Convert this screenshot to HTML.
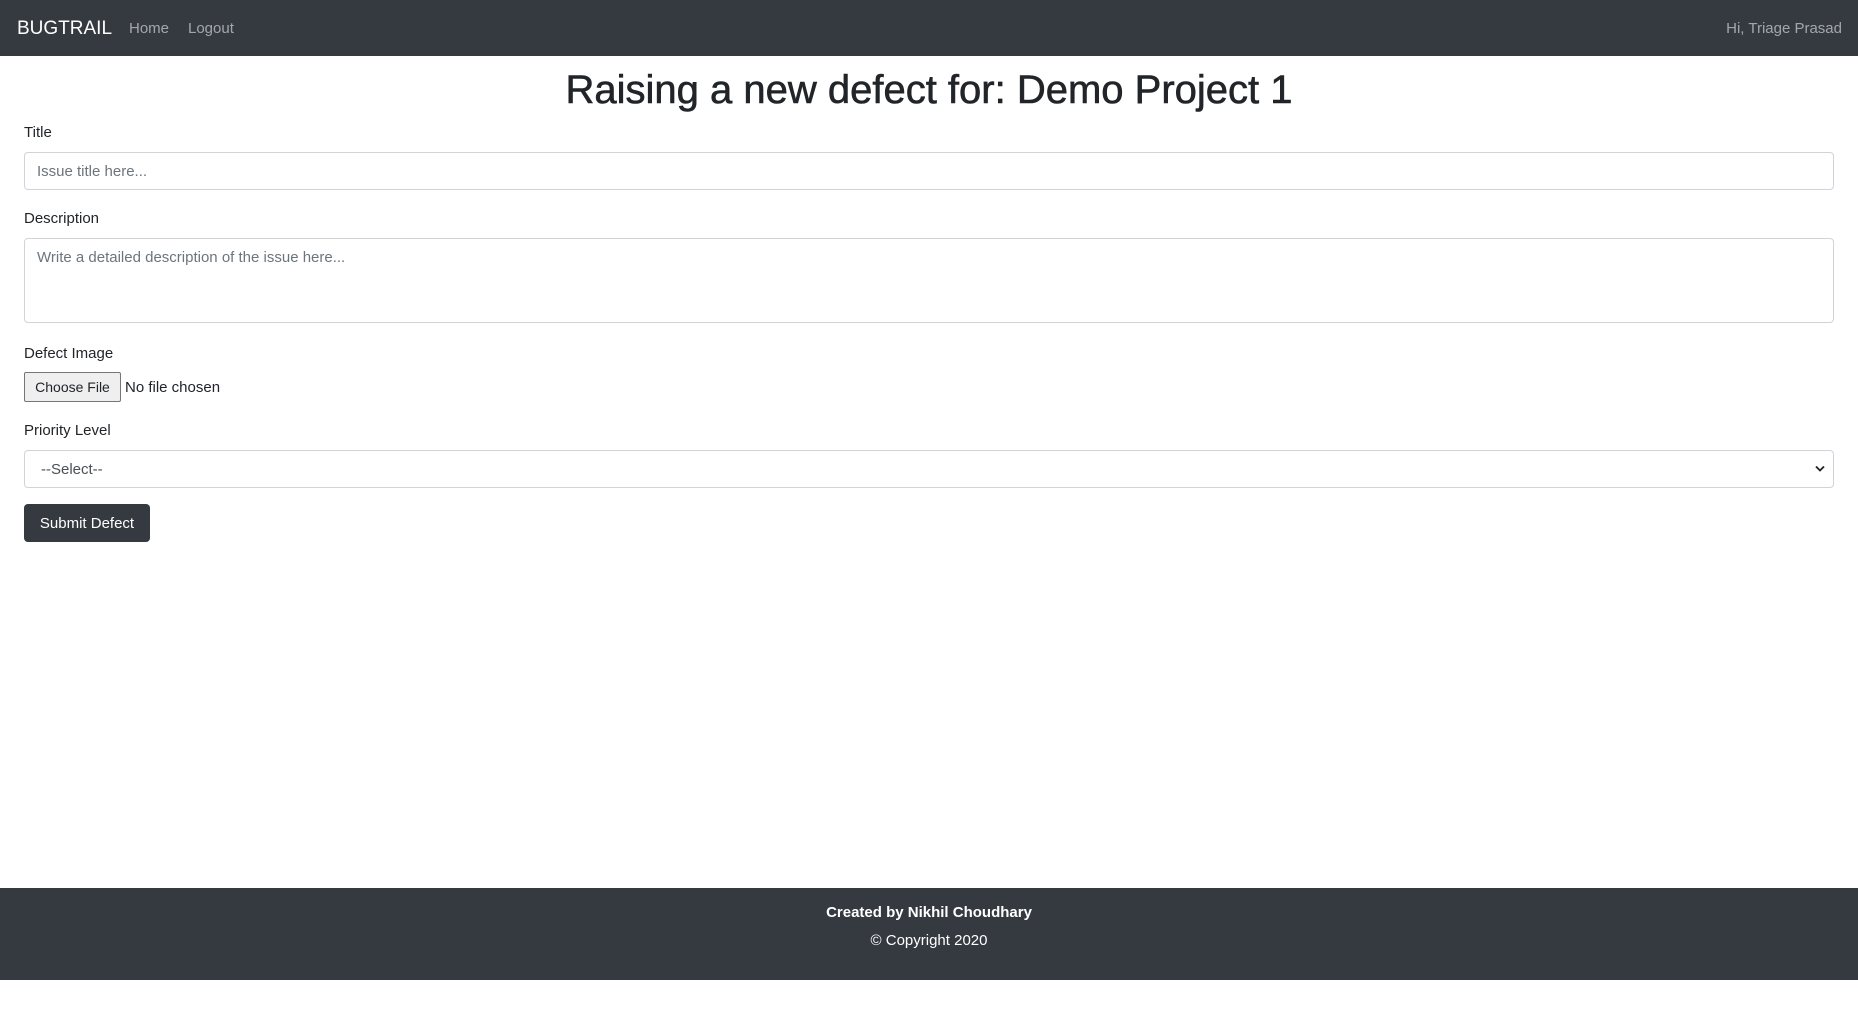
<!DOCTYPE html>
<html><head><meta charset="utf-8"><style>
*{box-sizing:border-box;margin:0;padding:0}
body{width:1858px;height:1025px;font-family:"Liberation Sans",sans-serif;font-size:15px;color:#212529;background:#fff;position:relative;overflow:hidden}
.nav{height:56px;background:#343a40;position:relative}
.nav span{position:absolute;top:20px;color:rgba(255,255,255,.55);font-size:15px}
.brand{left:17px!important;top:18px!important;color:#fff!important;font-size:19px!important}
h1{position:absolute;top:66px;left:0;width:1858px;text-align:center;font-size:40px;font-weight:400;line-height:48px;-webkit-text-stroke:0.6px #212529}
.lbl{position:absolute;left:24px;font-size:15px}
.box{position:absolute;left:24px;width:1810px;border:1px solid #ced4da;border-radius:4px;color:#6c757d;font-size:15px;padding-left:12px}
.btn{position:absolute;left:24px;top:504px;width:126px;height:38px;background:#343a40;color:#fff;border-radius:4px;line-height:38px;text-align:center;font-size:15px}
.file{position:absolute;left:24px;top:372px;width:97px;height:30px;background:#efefef;border:1px solid #767676;border-radius:2px;line-height:28px;text-align:center;font-size:14px}
.foot{position:absolute;top:888px;left:0;width:1858px;height:92px;background:#343a40;color:#fff;text-align:center}
</style></head><body>
<div class="nav"><span class="brand">BUGTRAIL</span><span style="left:129px">Home</span><span style="left:188px">Logout</span><span style="right:16px">Hi, Triage Prasad</span></div>
<h1>Raising a new defect for: Demo Project 1</h1>
<div class="lbl" style="top:124px">Title</div>
<div class="box" style="top:152px;height:38px;line-height:38px">Issue title here...</div>
<div class="lbl" style="top:210px">Description</div>
<div class="box" style="top:238px;height:85px;padding-top:10px">Write a detailed description of the issue here...</div>
<div class="lbl" style="top:345px">Defect Image</div>
<div class="file">Choose File</div>
<div style="position:absolute;left:125px;top:379px;font-size:15px">No file chosen</div>
<div class="lbl" style="top:422px">Priority Level</div>
<div class="box" style="top:450px;height:38px;line-height:38px;color:#495057;padding-left:16px">--Select--<svg style="position:absolute;right:8px;top:14px" width="10" height="8" viewBox="0 0 10 8"><path d="M1 1.5L5 5.5L9 1.5" stroke="#222" stroke-width="1.8" fill="none"/></svg></div>
<div class="btn" style="line-height:40px">Submit Defect</div>
<div class="foot"><div style="margin-top:16px;font-weight:bold;font-size:15px">Created by Nikhil Choudhary</div><div style="margin-top:11px;font-size:15px">© Copyright 2020</div></div>
</body></html>
